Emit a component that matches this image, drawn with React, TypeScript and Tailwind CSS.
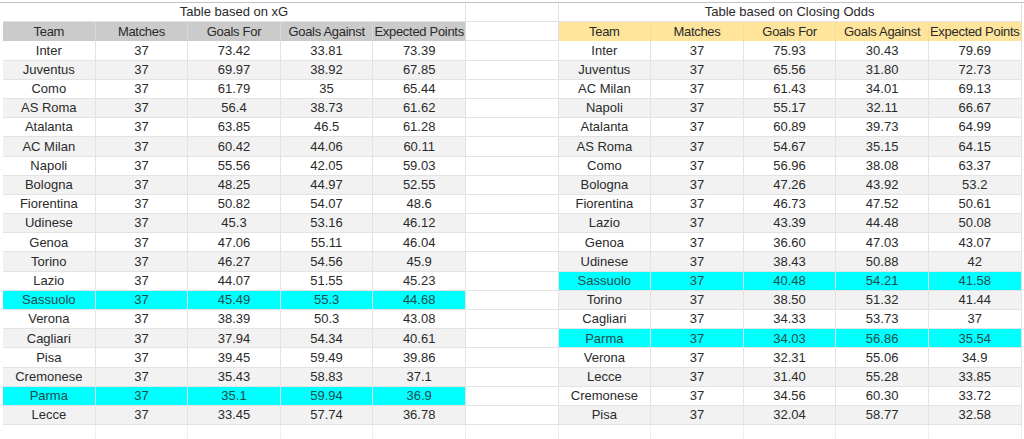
import React from "react"

type Row = [string, string, string, string, string, boolean?]

const xg: Row[] = [
  ["Inter", "37", "73.42", "33.81", "73.39"],
  ["Juventus", "37", "69.97", "38.92", "67.85"],
  ["Como", "37", "61.79", "35", "65.44"],
  ["AS Roma", "37", "56.4", "38.73", "61.62"],
  ["Atalanta", "37", "63.85", "46.5", "61.28"],
  ["AC Milan", "37", "60.42", "44.06", "60.11"],
  ["Napoli", "37", "55.56", "42.05", "59.03"],
  ["Bologna", "37", "48.25", "44.97", "52.55"],
  ["Fiorentina", "37", "50.82", "54.07", "48.6"],
  ["Udinese", "37", "45.3", "53.16", "46.12"],
  ["Genoa", "37", "47.06", "55.11", "46.04"],
  ["Torino", "37", "46.27", "54.56", "45.9"],
  ["Lazio", "37", "44.07", "51.55", "45.23"],
  ["Sassuolo", "37", "45.49", "55.3", "44.68", true],
  ["Verona", "37", "38.39", "50.3", "43.08"],
  ["Cagliari", "37", "37.94", "54.34", "40.61"],
  ["Pisa", "37", "39.45", "59.49", "39.86"],
  ["Cremonese", "37", "35.43", "58.83", "37.1"],
  ["Parma", "37", "35.1", "59.94", "36.9", true],
  ["Lecce", "37", "33.45", "57.74", "36.78"],
]

const odds: Row[] = [
  ["Inter", "37", "75.93", "30.43", "79.69"],
  ["Juventus", "37", "65.56", "31.80", "72.73"],
  ["AC Milan", "37", "61.43", "34.01", "69.13"],
  ["Napoli", "37", "55.17", "32.11", "66.67"],
  ["Atalanta", "37", "60.89", "39.73", "64.99"],
  ["AS Roma", "37", "54.67", "35.15", "64.15"],
  ["Como", "37", "56.96", "38.08", "63.37"],
  ["Bologna", "37", "47.26", "43.92", "53.2"],
  ["Fiorentina", "37", "46.73", "47.52", "50.61"],
  ["Lazio", "37", "43.39", "44.48", "50.08"],
  ["Genoa", "37", "36.60", "47.03", "43.07"],
  ["Udinese", "37", "38.43", "50.88", "42"],
  ["Sassuolo", "37", "40.48", "54.21", "41.58", true],
  ["Torino", "37", "38.50", "51.32", "41.44"],
  ["Cagliari", "37", "34.33", "53.73", "37"],
  ["Parma", "37", "34.03", "56.86", "35.54", true],
  ["Verona", "37", "32.31", "55.06", "34.9"],
  ["Lecce", "37", "31.40", "55.28", "33.85"],
  ["Cremonese", "37", "34.56", "60.30", "33.72"],
  ["Pisa", "37", "32.04", "58.77", "32.58"],
]

const heads = ["Team", "Matches", "Goals For", "Goals Against", "Expected Points"]

function Cells({ row, i }: { row: Row; i: number }) {
  const bg = row[5] ? "bg-[#00ffff] text-[#1f4d4d]" : i % 2 ? "bg-[#f2f2f2]" : "bg-white"
  return (
    <div className={`flex ${bg}`}>
      {row.slice(0, 5).map((c, k) => (
        <div key={k} className="w-[92.6px] h-[19.2px] flex items-center justify-center border-r border-b border-[#e3e3e3]">
          {c as string}
        </div>
      ))}
    </div>
  )
}

export default function App() {
  return (
    <div
      className="w-[1024px] h-[439px] bg-white text-[13px] text-[#2a2a2a] overflow-hidden whitespace-nowrap"
      style={{ fontFamily: '"Liberation Sans", Arial, sans-serif' }}
    >
      <div className="mt-[2px] border-t border-[#c4c4c4] pl-[3px]">
        {/* title row */}
        <div className="flex h-[19.2px]">
          <div className="w-[463px] flex items-center justify-center border-r border-b border-[#e3e3e3]">Table based on xG</div>
          <div className="w-[92.6px] border-r border-b border-[#e3e3e3]" />
          <div className="w-[463px] flex items-center justify-center border-r border-b border-[#e3e3e3]">Table based on Closing Odds</div>
        </div>
        {/* header row */}
        <div className="flex">
          <div className="flex bg-[#cbcbcb]">
            {heads.map((h) => (
              <div key={h} className="w-[92.6px] h-[19.2px] flex items-center justify-center border-r border-[#d8d8d8] tracking-[-0.3px]">{h}</div>
            ))}
          </div>
          <div className="w-[92.6px] h-[19.2px] border-r border-b border-[#e3e3e3]" />
          <div className="flex bg-[#ffe59c]">
            {heads.map((h) => (
              <div key={h} className="w-[92.6px] h-[19.2px] flex items-center justify-center border-r border-[#f0dc9c] tracking-[-0.3px]">{h}</div>
            ))}
          </div>
        </div>
        {xg.map((r, i) => (
          <div key={i} className="flex">
            <Cells row={r} i={i} />
            <div className="w-[92.6px] h-[19.2px] border-r border-b border-[#e3e3e3]" />
            <Cells row={odds[i]} i={i} />
          </div>
        ))}
        <div className="flex h-[19.2px]">
          {Array.from({ length: 11 }).map((_, k) => (
            <div key={k} className="w-[92.6px] border-r border-[#eeeeee]" />
          ))}
        </div>
      </div>
    </div>
  )
}
